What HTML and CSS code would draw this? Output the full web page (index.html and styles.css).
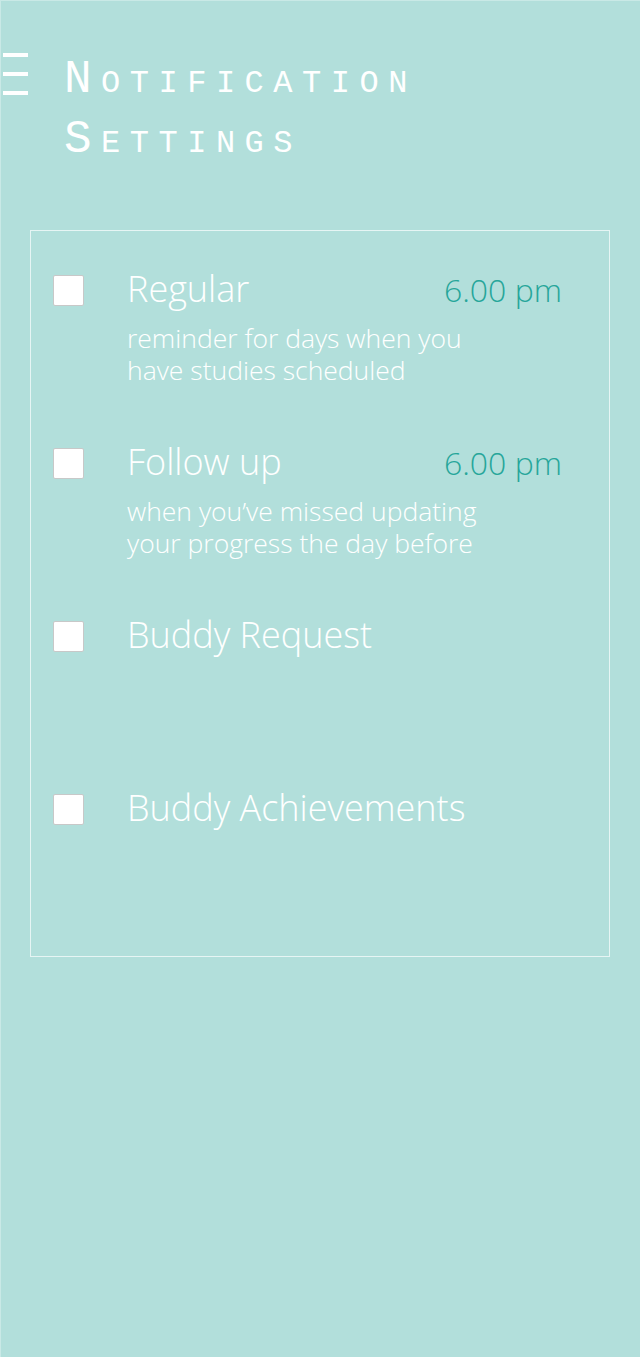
FILE: index.html
```html
<!DOCTYPE html>
<html>
<head>
<meta charset="utf-8">
<link rel="stylesheet" href="styles.css">
</head>
<body>
<div class="page">
  <header class="header">
    <div class="menu" aria-label="menu">
      <span class="bar"></span><span class="bar"></span><span class="bar"></span>
    </div>
    <h1 class="title">Notification<br>Settings</h1>
  </header>
  <section class="card">
    <div class="row">
      <span class="check"></span>
      <div class="content">
        <div class="head"><span class="label">Regular</span><span class="time">6.00 pm</span></div>
        <p class="desc">reminder for days when you<br>have studies scheduled</p>
      </div>
    </div>
    <div class="row">
      <span class="check"></span>
      <div class="content">
        <div class="head"><span class="label">Follow up</span><span class="time">6.00 pm</span></div>
        <p class="desc">when you’ve missed updating<br>your progress the day before</p>
      </div>
    </div>
    <div class="row">
      <span class="check"></span>
      <div class="content">
        <div class="head"><span class="label">Buddy Request</span></div>
      </div>
    </div>
    <div class="row">
      <span class="check"></span>
      <div class="content">
        <div class="head"><span class="label">Buddy Achievements</span></div>
      </div>
    </div>
  </section>
</div>
</body>
</html>
```

FILE: styles.css
```css
html, body {
  margin: 0;
  padding: 0;
  background: #b2dfdb;
}
.page {
  width: 640px;
  height: 1357px;
  box-sizing: border-box;
  background: #b2dfdb;
  border-left: 1px solid #c9e9e6;
  border-top: 1px solid #c9e9e6;
  font-family: "Open Sans", "Liberation Sans", sans-serif;
  color: #ffffff;
}
.header {
  display: flex;
  align-items: flex-start;
  padding-top: 51px;
  padding-left: 2px;
}
.menu {
  display: flex;
  flex-direction: column;
  gap: 15px;
  width: 25px;
  margin-top: 1px;
}
.bar {
  display: block;
  height: 4px;
  background: #ffffff;
}
.title {
  margin: -2px 0 0 36px;
  font-family: "Liberation Mono", monospace;
  font-weight: normal;
  font-variant: small-caps;
  font-size: 46px;
  line-height: 60px;
  letter-spacing: 9.5px;
  color: #ffffff;
}
.card {
  margin: 60px 0 0 29px;
  width: 580px;
  height: 727px;
  box-sizing: border-box;
  border: 1px solid #e6f5f4;
  padding: 40px 47px 0 22px;
}
.row {
  display: flex;
  gap: 43px;
  height: 173px;
}
.check {
  flex: none;
  width: 31px;
  height: 31px;
  box-sizing: border-box;
  margin-top: 4px;
  background: #ffffff;
  border: 1px solid #c8c8c8;
  border-radius: 2px;
}
.content {
  flex: 1;
}
.head {
  display: flex;
  justify-content: space-between;
  align-items: baseline;
}
.label {
  font-size: 36px;
  font-weight: 300;
  line-height: 36px;
}
.time {
  font-size: 32px;
  font-weight: 300;
  line-height: 36px;
  color: #26a69a;
}
.desc {
  margin: 14px 0 0;
  font-size: 26.5px;
  font-weight: 300;
  line-height: 32px;
}
```
